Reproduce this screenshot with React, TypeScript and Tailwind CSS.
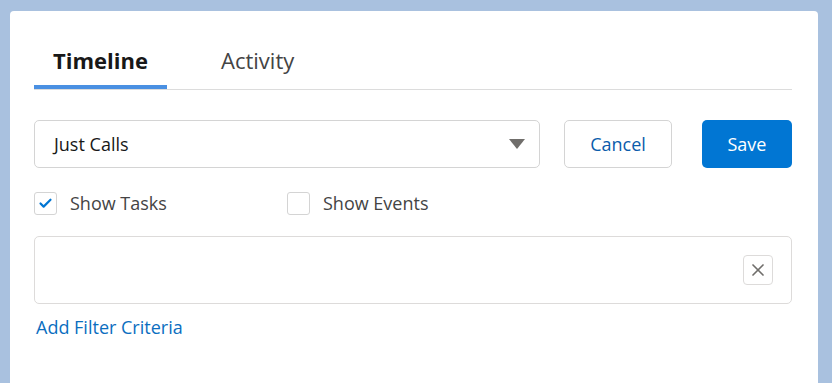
import { Check, X } from "lucide-react";

const FONT = { fontFamily: '"Open Sans", "Noto Sans", Arial, sans-serif' };

function Checkbox({ checked, label }: { checked?: boolean; label: string }) {
  return (
    <label className="flex items-center gap-[13px]">
      <span className="flex h-[23px] w-[23px] items-center justify-center rounded-[3px] border border-[#d4d4d4] bg-white">
        {checked && <Check size={15} strokeWidth={3.5} className="text-[#0176d3]" />}
      </span>
      <span className="text-[18px] text-[#444444]">{label}</span>
    </label>
  );
}

export default function App() {
  return (
    <div className="h-[383px] w-[832px] overflow-hidden bg-[#a9c1df] pl-[10px] pr-[14px] pt-[11px]" style={FONT}>
      <div className="h-[400px] rounded-[4px] bg-white pl-6 pr-[26px] pt-[34px]">
        {/* tabs */}
        <div className="flex border-b border-[#dcdcdc]">
          <div className="w-[133px] border-b-[4px] border-[#4a90e2] pl-[19px] pb-[10px] text-[22px] font-bold leading-[30px] text-[#181818]">
            Timeline
          </div>
          <div className="pl-[54px] pb-[10px] text-[22px] leading-[30px] text-[#444444]">Activity</div>
        </div>

        {/* select + buttons */}
        <div className="mt-[30px] flex items-center">
          <div className="flex h-[48px] w-[506px] items-center justify-between rounded-[5px] border border-[#d4d4d4] pl-[19px] pr-[14px]">
            <span className="text-[18px] text-[#181818]">Just Calls</span>
            <svg width="16" height="10" viewBox="0 0 16 10">
              <path d="M0 0 L16 0 L8 10 Z" fill="#706e6b" />
            </svg>
          </div>
          <button className="ml-[24px] h-[48px] w-[108px] rounded-[5px] border border-[#d4d4d4] bg-white text-[18px] text-[#0b5cab]">
            Cancel
          </button>
          <button className="ml-[30px] h-[48px] w-[90px] rounded-[5px] bg-[#0176d3] text-[18px] text-white">
            Save
          </button>
        </div>

        {/* checkboxes */}
        <div className="mt-[22px] flex items-center">
          <div className="w-[253px]">
            <Checkbox checked label="Show Tasks" />
          </div>
          <Checkbox label="Show Events" />
        </div>

        {/* filter box */}
        <div className="mt-[19px] flex h-[68px] items-center justify-end rounded-[5px] border border-[#dddbda] pr-[18px]">
          <button className="flex h-[30px] w-[30px] items-center justify-center rounded-[4px] border border-[#dddbda] bg-white">
            <X size={20} strokeWidth={2} className="text-[#706e6b]" />
          </button>
        </div>

        <div className="mt-[10px] pl-[2px] text-[18px] text-[#0b6ebf]">Add Filter Criteria</div>
      </div>
    </div>
  );
}
